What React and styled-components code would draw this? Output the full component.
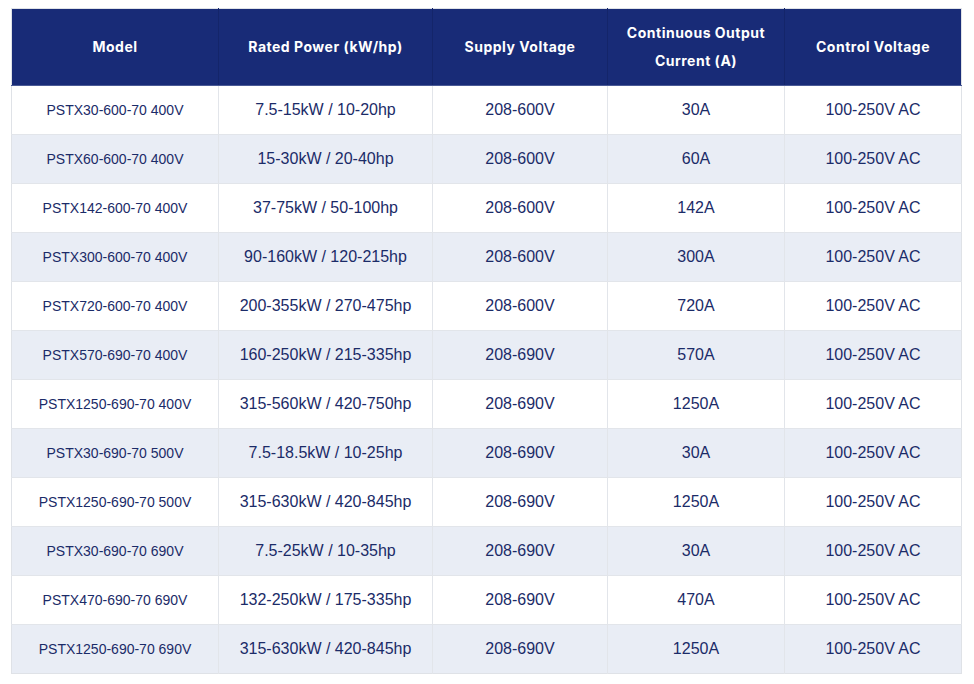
import React from 'react'
import styled, { createGlobalStyle } from 'styled-components'

const Global = createGlobalStyle`
  html, body {
    margin: 0;
    background: #ffffff;
  }
  body {
    padding: 8px 0 0 11px;
  }
`

const Table = styled.table`
  width: 950px;
  border-collapse: collapse;
  border: 1px solid #dfe2e7;
  table-layout: fixed;
`

const HeadCell = styled.th`
  height: 76px;
  padding: 0 12px;
  background: #182b77;
  color: #ffffff;
  font-family: Inter, "Open Sans", sans-serif;
  font-size: 14px;
  font-weight: 700;
  letter-spacing: 0.5px;
  line-height: 28px;
  text-align: center;
  border-left: 1px solid #14256a;
  border-bottom: 1px solid #4a5a96;
  &:first-child {
    border-left: none;
  }
`

const Row = styled.tr`
  background: ${(p) => (p.$alt ? '#e9edf5' : '#ffffff')};
`

const Cell = styled.td`
  height: 48px;
  padding: 0 4px;
  text-align: center;
  color: #1b2b68;
  font-family: "Liberation Sans", Arial, sans-serif;
  font-size: ${(p) => (p.$small ? '14px' : '16px')};
  border-left: 1px solid #e2e5ea;
  border-top: 1px solid #e2e5ea;
  &:first-child {
    border-left: none;
  }
`

const columns = [
  { label: 'Model', width: 207 },
  { label: 'Rated Power (kW/hp)', width: 214 },
  { label: 'Supply Voltage', width: 175 },
  { label: 'Continuous Output Current (A)', width: 177 },
  { label: 'Control Voltage', width: 177 },
]

const rows = [
  ['PSTX30-600-70 400V', '7.5-15kW / 10-20hp', '208-600V', '30A'],
  ['PSTX60-600-70 400V', '15-30kW / 20-40hp', '208-600V', '60A'],
  ['PSTX142-600-70 400V', '37-75kW / 50-100hp', '208-600V', '142A'],
  ['PSTX300-600-70 400V', '90-160kW / 120-215hp', '208-600V', '300A'],
  ['PSTX720-600-70 400V', '200-355kW / 270-475hp', '208-600V', '720A'],
  ['PSTX570-690-70 400V', '160-250kW / 215-335hp', '208-690V', '570A'],
  ['PSTX1250-690-70 400V', '315-560kW / 420-750hp', '208-690V', '1250A'],
  ['PSTX30-690-70 500V', '7.5-18.5kW / 10-25hp', '208-690V', '30A'],
  ['PSTX1250-690-70 500V', '315-630kW / 420-845hp', '208-690V', '1250A'],
  ['PSTX30-690-70 690V', '7.5-25kW / 10-35hp', '208-690V', '30A'],
  ['PSTX470-690-70 690V', '132-250kW / 175-335hp', '208-690V', '470A'],
  ['PSTX1250-690-70 690V', '315-630kW / 420-845hp', '208-690V', '1250A'],
]

export default function App() {
  return (
    <>
      <Global />
      <Table>
        <colgroup>
          {columns.map((c) => (
            <col key={c.label} style={{ width: c.width }} />
          ))}
        </colgroup>
        <thead>
          <tr>
            {columns.map((c) => (
              <HeadCell key={c.label}>{c.label}</HeadCell>
            ))}
          </tr>
        </thead>
        <tbody>
          {rows.map((r, i) => (
            <Row key={r[0] + i} $alt={i % 2 === 1}>
              <Cell $small>{r[0]}</Cell>
              <Cell>{r[1]}</Cell>
              <Cell>{r[2]}</Cell>
              <Cell>{r[3]}</Cell>
              <Cell>100-250V AC</Cell>
            </Row>
          ))}
        </tbody>
      </Table>
    </>
  )
}
